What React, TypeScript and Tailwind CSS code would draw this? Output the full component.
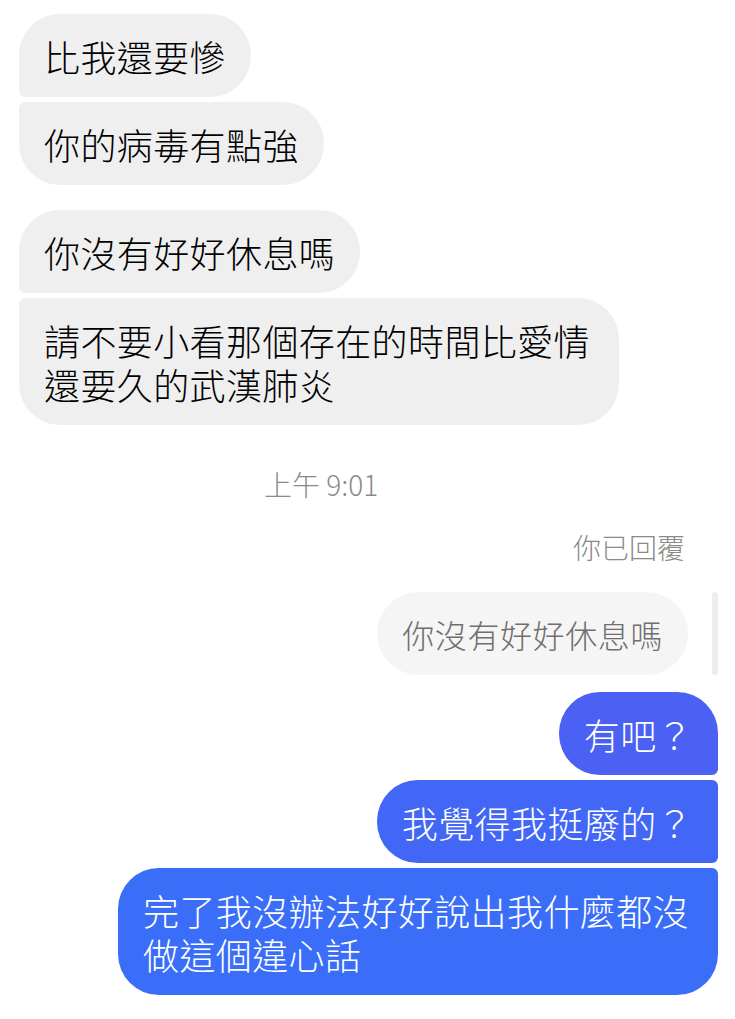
import { FC } from "react";

// Chat thread screenshot: incoming grey bubbles, a replied-to quote, outgoing blue bubbles
const font = "font-['Noto_Sans_CJK_TC','Noto_Sans_CJK_SC',sans-serif]";

interface BubbleProps {
	text: string;
	shape: string;
}

// Incoming message (left, grey)
const InBubble: FC<BubbleProps> = ({ text, shape }) => (
	<div
		className={`max-w-[600px] bg-[#efefef] text-black text-[36px] font-light leading-[44px] tracking-[0.4px] px-[25px] py-[19.5px] ${shape}`}
	>
		{text}
	</div>
);

// Outgoing message (right, blue)
const OutBubble: FC<BubbleProps & { color: string }> = ({ text, shape, color }) => (
	<div
		className={`max-w-[600px] text-white text-[36px] font-light leading-[44px] tracking-[0.4px] px-[25px] py-[19.5px] ${shape} ${color}`}
	>
		{text}
	</div>
);

export default function App() {
	return (
		<div className={`w-[735px] h-[1019px] bg-white overflow-hidden ${font}`}>
			<div className="pt-[14px] pl-[19px] pr-[17px] flex flex-col">
				{/* First group */}
				<div className="flex flex-col items-start gap-[5px]">
					<InBubble text="比我還要慘" shape="rounded-[41px] rounded-bl-[6px]" />
					<InBubble text="你的病毒有點強" shape="rounded-[41px] rounded-tl-[6px]" />
				</div>

				{/* Second group */}
				<div className="flex flex-col items-start gap-[5px] mt-[25px]">
					<InBubble text="你沒有好好休息嗎" shape="rounded-[41px] rounded-bl-[6px]" />
					<InBubble
						text="請不要小看那個存在的時間比愛情還要久的武漢肺炎"
						shape="rounded-[41px] rounded-tl-[6px]"
					/>
				</div>

				{/* Timestamp */}
				<div className="mt-[44px] pl-[245px] text-[28px] font-light leading-[30px] text-[#8a8a8e]">上午 9:01</div>

				{/* Reply label */}
				<div className="mt-[33px] mr-[33px] self-end text-[28px] font-light leading-[30px] text-[#8a8a8a]">
					你已回覆
				</div>

				{/* Quoted message */}
				<div className="mt-[30px] flex justify-end gap-6">
					<div className="bg-[#f5f5f5] text-[#6f6f6f] text-[32px] font-light tracking-[0.6px] leading-[44px] px-[25px] py-[19.5px] rounded-full">
						你沒有好好休息嗎
					</div>
					<div className="w-[6px] rounded-full bg-[#ededed]" />
				</div>

				{/* Outgoing group */}
				<div className="mt-[17px] flex flex-col items-end gap-[5px]">
					<OutBubble text="有吧？" shape="rounded-[41px] rounded-br-[6px]" color="bg-[#4a61f4]" />
					<OutBubble text="我覺得我挺廢的？" shape="rounded-[41px] rounded-r-[6px]" color="bg-[#4267f6]" />
					<OutBubble
						text="完了我沒辦法好好說出我什麼都沒做這個違心話"
						shape="rounded-[41px] rounded-tr-[6px]"
						color="bg-[#3a6ef8]"
					/>
				</div>
			</div>
		</div>
	);
}
